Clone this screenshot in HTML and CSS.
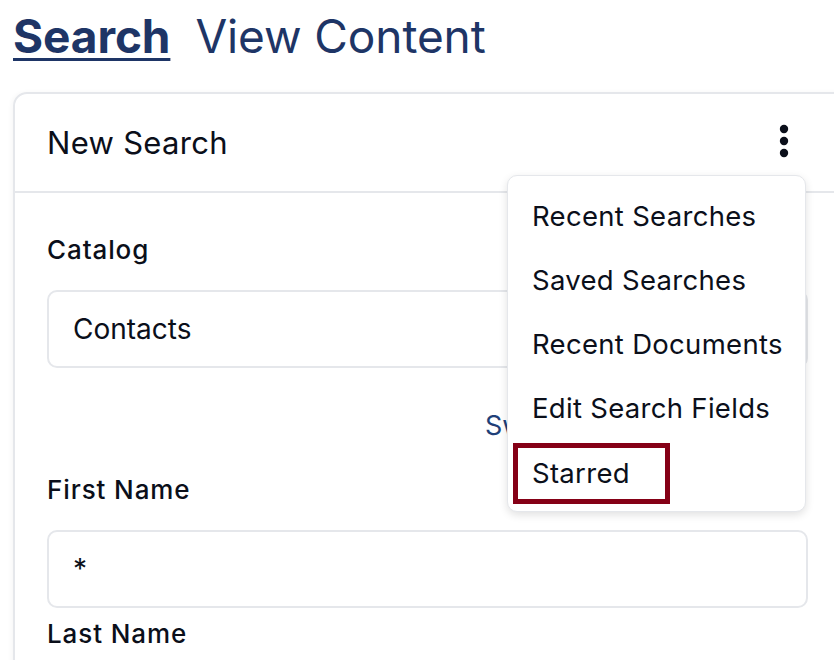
FILE: index.html
```html
<!DOCTYPE html>
<html>
<head>
<meta charset="utf-8">
<link rel="stylesheet" href="styles.css">
</head>
<body>
<div class="page">
  <nav class="tabs">
    <a class="tab active">Search</a>
    <a class="tab">View Content</a>
  </nav>
  <section class="card">
    <header class="card-head">
      <h2 class="card-title">New Search</h2>
      <button class="kebab" aria-label="More">
        <svg width="10" height="34" viewBox="0 0 10 34"><circle cx="5" cy="5" r="4.2" fill="#0b0f1a"/><circle cx="5" cy="17" r="4.2" fill="#0b0f1a"/><circle cx="5" cy="29" r="4.2" fill="#0b0f1a"/></svg>
      </button>
      <ul class="menu">
        <li class="menu-item">Recent Searches</li>
        <li class="menu-item">Saved Searches</li>
        <li class="menu-item">Recent Documents</li>
        <li class="menu-item">Edit Search Fields</li>
        <li class="menu-item starred">Starred</li>
      </ul>
    </header>
    <div class="card-body">
      <label class="field-label">Catalog</label>
      <div class="input">Contacts</div>
      <div class="switch-row"><a class="switch-link">Switch to Advanced</a></div>
      <label class="field-label">First Name</label>
      <div class="input">*</div>
      <label class="field-label last">Last Name</label>
    </div>
  </section>
</div>
</body>
</html>
```
FILE: styles.css
```css
html, body {
  margin: 0;
  padding: 0;
  background: #ffffff;
  overflow: hidden;
}
body {
  font-family: Inter, "Liberation Sans", sans-serif;
  color: #0b0f1a;
}
.page {
  padding: 8px 0 0 13px;
  width: 860px;
}
.tabs {
  display: flex;
  gap: 25px;
  height: 84px;
}
.tab {
  font-size: 46px;
  line-height: 56px;
  color: #1e3566;
  letter-spacing: -0.1px;
}
.tab.active {
  font-weight: 700;
  text-decoration: underline;
  text-decoration-thickness: 3px;
  text-underline-offset: 5px;
}
.card {
  border: 2px solid #e5e7eb;
  border-radius: 14px;
  width: 880px;
  height: 700px;
  box-shadow: -2px 0 4px rgba(0,0,0,0.03);
}
.card-head {
  position: relative;
  height: 97px;
  border-bottom: 2px solid #e5e7eb;
  display: flex;
  align-items: center;
  padding-left: 32px;
}
.card-title {
  margin: 0;
  font-size: 31px;
  font-weight: 400;
  letter-spacing: 0.3px;
  color: #0b0f1a;
}
.kebab {
  position: absolute;
  left: 762px;
  top: 30px;
  border: 0;
  background: none;
  padding: 0;
  width: 14px;
  height: 36px;
}
.menu {
  position: absolute;
  left: 492px;
  top: 81px;
  width: 299px;
  height: 337px;
  margin: 0;
  padding: 8px 0 0 0;
  list-style: none;
  background: #fff;
  border: 1px solid #e5e7eb;
  border-radius: 10px;
  box-shadow: 0 3px 8px rgba(0,0,0,0.12);
  box-sizing: border-box;
  z-index: 5;
}
.menu-item {
  font-size: 27.5px;
  line-height: 64px;
  padding-left: 24px;
  letter-spacing: 0.3px;
  color: #0b0f1a;
  white-space: nowrap;
}
.menu-item.starred {
  display: inline-block;
  margin-left: 5px;
  margin-top: 3px;
  padding-left: 14px;
  width: 133px;
  line-height: 51px;
  border: 5px solid #850016;
}
.card-body {
  padding: 42px 0 0 32px;
  display: flex;
  flex-direction: column;
}
.field-label {
  font-size: 26px;
  font-weight: 500;
  line-height: 30px;
  letter-spacing: 0.9px;
  color: #0b0f1a;
}
.input {
  margin-top: 25px;
  width: 761px;
  height: 78px;
  flex: none;
  box-sizing: border-box;
  border: 2px solid #e5e7eb;
  border-radius: 10px;
  padding-left: 24px;
  display: flex;
  align-items: center;
  font-size: 28px;
  color: #0b0f1a;
}
.switch-row {
  height: 107px;
  box-sizing: border-box;
  padding: 7px 0 0 438px;
  display: flex;
  align-items: center;
}
.switch-link {
  font-size: 27px;
  color: #1f3f78;
  white-space: nowrap;
}
.field-label.last {
  margin-top: 11px;
}
```
